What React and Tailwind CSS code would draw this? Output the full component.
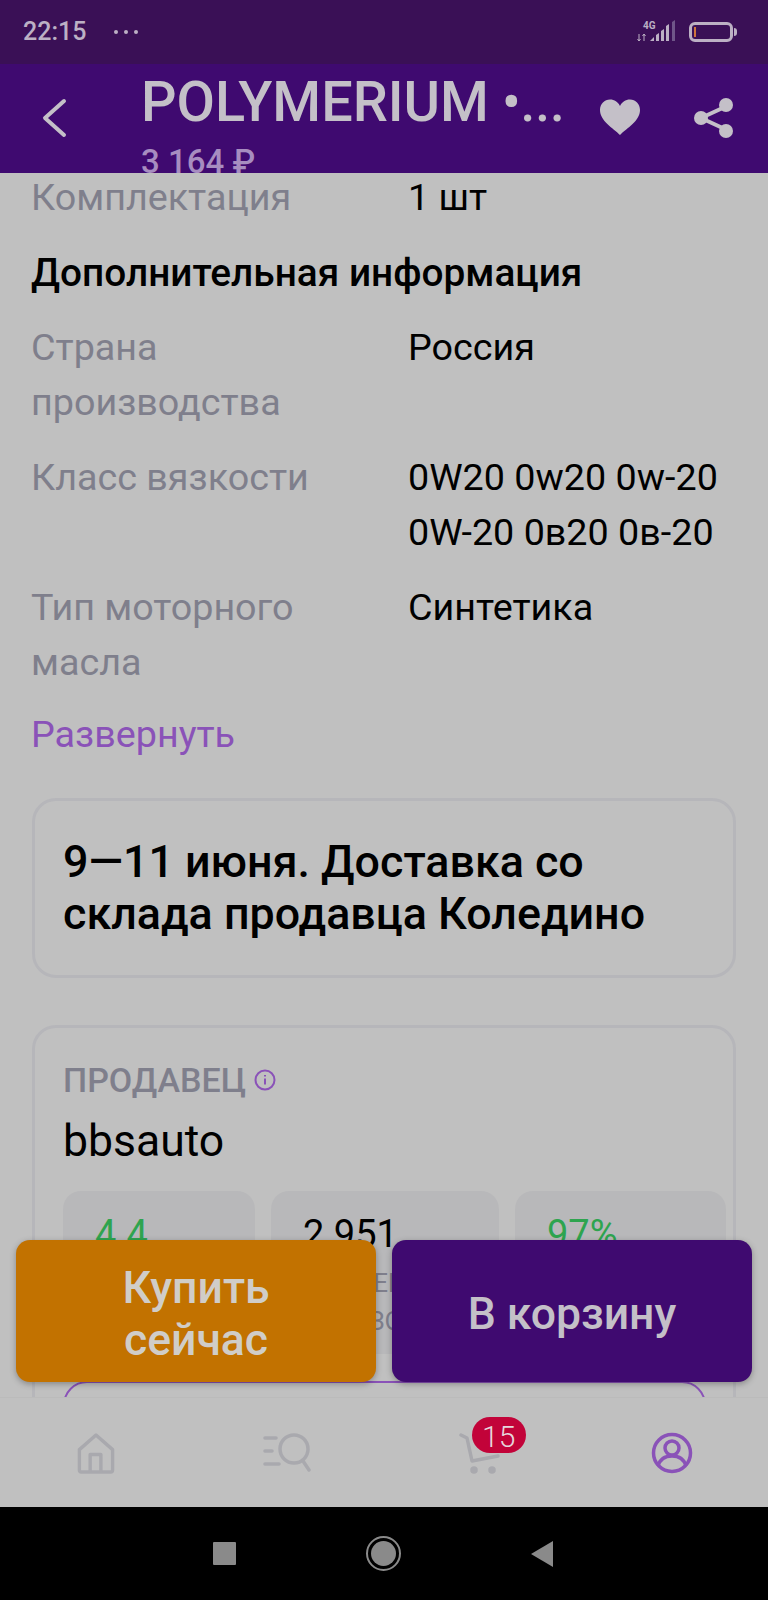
import React from 'react';

const specs = [
  { label: ['Страна', 'производства'], value: ['Россия'] },
  { label: ['Класс вязкости'], value: ['0W20 0w20 0w-20', '0W-20 0в20 0в-20'] },
  { label: ['Тип моторного', 'масла'], value: ['Синтетика'] },
];

function SpecRow({ label, value }) {
  return (
    <div className="flex text-[37.7px] leading-[55px] mb-5">
      <div className="w-[377px] shrink-0 text-[#7f7f8c]">
        {label.map((l) => <div key={l}>{l}</div>)}
      </div>
      <div className="text-black">
        {value.map((v) => <div key={v} className="whitespace-nowrap">{v}</div>)}
      </div>
    </div>
  );
}

function StatTile({ className, color, value, label }) {
  return (
    <div className={`h-[163px] bg-[#b8b8ba] rounded-[18px] pl-8 pt-[16px] ${className}`}>
      <div className={`text-[38px] leading-[55px] ${color}`}>{value}</div>
      <div className="mt-[2px] text-[26px] leading-[38px] text-[#7f7f8c]">
        {label.map((l) => <div key={l}>{l}</div>)}
      </div>
    </div>
  );
}

function StatusBar() {
  return (
    <div className="h-16 shrink-0 bg-[#3a1056] flex items-center pl-[23px] pr-[31px] text-[#bcb0c4]">
      <span className="text-[25px] font-medium">22:15</span>
      <span className="ml-[28px] flex gap-[6px]">
        <span className="w-[4px] h-[4px] rounded-full bg-[#bcb0c4]" />
        <span className="w-[4px] h-[4px] rounded-full bg-[#bcb0c4]" />
        <span className="w-[4px] h-[4px] rounded-full bg-[#bcb0c4]" />
      </span>
      <div className="ml-auto flex items-center">
        <svg width="44" height="26" viewBox="0 0 44 26">
          <text x="6" y="10" fontSize="10" fontWeight="700" fill="#bcb0c4" fontFamily="Roboto, sans-serif">4G</text>
          <path d="M2 15v7M0.5 20l1.5 2 1.500-2M7 22v-7M5.500 17l1.500-2 1.500 2" stroke="#bcb0c4" strokeWidth="1" fill="none" />
          <path d="M13 22l4-4v4zM19 22v-6l3-2v8zM24 22V12l3-2v12z" fill="#bcb0c4" />
          <path d="M29 22V7l3-2v17z" fill="#bcb0c4" />
          <path d="M35 22V3l3-2v21z" fill="#6f5689" />
        </svg>
        <div className="ml-[8px] w-[44px] h-[20px] border-[3px] border-[#bcb0c4] rounded-[6px] flex items-center pl-[2px]">
          <div className="w-[2px] h-[10px] bg-[#d0743c]" />
        </div>
        <div className="ml-[1px] w-[3px] h-[8px] rounded-r-sm bg-[#bcb0c4]" />
      </div>
    </div>
  );
}

function Header() {
  return (
    <div className="h-[109px] shrink-0 bg-[#3f0a70] flex overflow-hidden text-[#c4c0c8]">
      <div className="w-[141px] shrink-0 pl-[41px] pt-[34px]">
        <svg width="26" height="40" viewBox="0 0 26 40" fill="none" stroke="#c4c0c8" strokeWidth="4" strokeLinecap="round" strokeLinejoin="round">
          <path d="M23 3L4 20l19 17" />
        </svg>
      </div>
      <div className="flex-1 min-w-0">
        <div className="text-[55.8px] leading-[64px] mt-[6px] font-medium whitespace-nowrap">
          POLYMERIUM<span className="text-[53px]"> •...</span>
        </div>
        <div className="text-[33px] leading-[40px] mt-[7px] font-medium text-[#a78dc0]">3 164 ₽</div>
      </div>
      <div className="flex shrink-0 pr-[33px] pt-[35px] gap-[52px]">
        <svg width="42" height="36" viewBox="0 0 42 36">
          <path d="M21 36C14 29 1 22 1 11 1 5 5.500 0.500 11 0.500c4.500 0 8 2.500 10 6.500 2-4 5.500-6.500 10-6.500C36.500 0.500 41 5 41 11c0 11-13 18-20 25z" fill="#c4c0c8" />
        </svg>
        <svg width="42" height="40" viewBox="0 0 42 40" className="-mt-px">
          <path d="M34 8L8 20l26 12" stroke="#c4c0c8" strokeWidth="4" fill="none" />
          <circle cx="33" cy="7" r="7" fill="#c4c0c8" />
          <circle cx="8" cy="20" r="7" fill="#c4c0c8" />
          <circle cx="33" cy="33" r="7" fill="#c4c0c8" />
        </svg>
      </div>
    </div>
  );
}

function NavBar() {
  return (
    <div className="h-[110px] shrink-0 bg-[#c0c0c0] border-t border-[#bbbbbb] relative flex text-[#a9a9ae]">
      <div className="flex-1 flex justify-center pt-[35px]">
        <svg width="40" height="41" viewBox="0 0 40 42" fill="none" stroke="#a9a9ae" strokeWidth="3.500" strokeLinejoin="round">
          <path d="M3 17L20 2l17 15v21a2 2 0 0 1-2 2H5a2 2 0 0 1-2-2z" />
          <path d="M14 40V22h11v18" />
        </svg>
      </div>
      <div className="flex-1 flex justify-center pt-[35px] pr-[2px]">
        <svg width="48" height="40" viewBox="0 0 48 40" fill="none" stroke="#a9a9ae" strokeWidth="3.500" strokeLinecap="round">
          <path d="M2 5h11M2 18h7M2 31h14" />
          <circle cx="31" cy="16" r="14" />
          <path d="M40 28l6 9" />
        </svg>
      </div>
      <div className="flex-1 flex justify-center pt-[35px]">
        <div className="relative w-[44px] h-[44px]">
          <svg width="44" height="42" viewBox="0 0 44 42" fill="none" stroke="#a9a9ae" strokeWidth="3.500" strokeLinejoin="round" strokeLinecap="round">
            <path d="M2 2l6 3 5 23 26-5" />
            <circle cx="15" cy="37" r="2" fill="#a9a9ae" />
            <circle cx="33" cy="37" r="2" fill="#a9a9ae" />
          </svg>
          <div className="absolute left-[13px] top-[-16px] w-[54px] h-[36px] rounded-[18px] bg-[#c20339] text-[#e6d6dc] text-[30px] leading-[40px] font-light text-center">15</div>
        </div>
      </div>
      <div className="flex-1 flex justify-center pt-[34px]">
        <svg width="42" height="42" viewBox="0 0 42 42" fill="none" stroke="#8a52b8" strokeWidth="3.500">
          <circle cx="21" cy="21" r="18.500" />
          <circle cx="21" cy="16" r="7" />
          <path d="M7 34c2-7 7-10 14-10s12 3 14 10" />
        </svg>
      </div>
    </div>
  );
}

function SystemBar() {
  return (
    <div className="h-[93px] shrink-0 bg-black flex items-center justify-center">
      <div className="flex items-center gap-[130px] pr-[2px]">
        <div className="w-[23px] h-[23px] bg-[#8a8a8a] rounded-[1px]" />
        <div className="w-[35px] h-[35px] rounded-full border-[2px] border-[#8a8a8a] flex items-center justify-center">
          <div className="w-[25px] h-[25px] rounded-full bg-[#8a8a8a]" />
        </div>
        <svg width="22" height="26" viewBox="0 0 22 26">
          <path d="M22 0v26L0 13z" fill="#8a8a8a" />
        </svg>
      </div>
    </div>
  );
}

export default function App() {
  return (
    <div className="relative w-[768px] h-[1600px] flex flex-col overflow-hidden bg-[#c0c0c0] font-['Roboto',sans-serif]">
      <StatusBar />
      <Header />
      <div className="flex-1 min-h-0 overflow-hidden pl-8 pr-8">
        <div className="-ml-px">
          <div className="flex text-[37.7px] leading-[55px] -mt-[3px]">
            <div className="w-[377px] shrink-0 text-[#7f7f8c]">Комплектация</div>
            <div className="text-black">1 шт</div>
          </div>
          <div className="text-[38.8px] leading-[55px] font-medium text-black mt-[20px] mb-[20px] whitespace-nowrap">Дополнительная информация</div>
          {specs.map((s) => <SpecRow key={s.label[0]} {...s} />)}
          <div className="text-[37.7px] leading-[55px] text-[#8a52b8] -mt-[3px]">Развернуть</div>
        </div>

        <div className="mt-[36px] h-[180px] rounded-[24px] border-[3px] border-[#b6b6ba] px-[28px] flex flex-col justify-center">
          <div className="text-[44.8px] leading-[52px] font-medium text-black whitespace-nowrap">9—11 июня. Доставка со</div>
          <div className="text-[44.8px] leading-[52px] font-medium text-black whitespace-nowrap">склада продавца Коледино</div>
        </div>

        <div className="mt-[47px] h-[500px] rounded-[24px] border-[3px] border-[#b6b6ba] pl-[28px] pr-[6px] pt-[34px]">
          <div className="flex items-center gap-[8px] text-[34px] leading-[36px] font-medium text-[#7f7f8c]">
            ПРОДАВЕЦ
            <svg width="22" height="22" viewBox="0 0 22 22" fill="none" stroke="#8a52b8" strokeWidth="2">
              <circle cx="11" cy="11" r="9.500" />
              <path d="M11 9.500v6M11 6v1.500" />
            </svg>
          </div>
          <div className="text-[44.5px] leading-[50px] text-black mt-[18px]">bbsauto</div>
          <div className="flex gap-4 mt-[25px]">
            <StatTile className="w-[192px]" color="text-[#2ea44f]" value="4.4" label={['РЕЙТИНГ']} />
            <StatTile className="w-[228px]" color="text-black" value="2 951" label={['ОЦЕНЕНО', 'ЗАКАЗОВ']} />
            <StatTile className="w-[211px]" color="text-[#2ea44f]" value="97%" label={['ОТЗЫВОВ']} />
          </div>
          <div className="mt-[27px] w-[643px] h-[60px] rounded-[24px] border-[2px] border-[#8a52b8]" />
        </div>
      </div>
      <NavBar />
      <SystemBar />

      <div className="absolute left-4 top-[1240px] w-[736px] h-[142px] flex gap-4">
        <button className="flex-1 rounded-[14px] bg-[#c27200] pt-[6px] text-[#d0cdc8] text-[44.5px] leading-[52px] font-medium shadow-[0_2px_6px_rgba(0,0,0,0.3)]">
          Купить<br />сейчас
        </button>
        <button className="flex-1 rounded-[14px] bg-[#3f0a70] pt-[6px] text-[#c4c0c8] text-[44.5px] leading-[52px] font-medium shadow-[0_2px_6px_rgba(0,0,0,0.3)]">
          В корзину
        </button>
      </div>
    </div>
  );
}
